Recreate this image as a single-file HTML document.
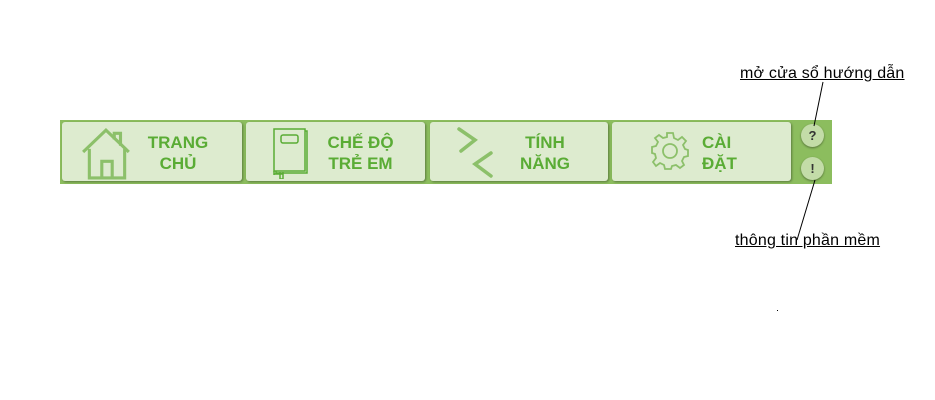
<!DOCTYPE html><html><head><style>
body{margin:0;width:935px;height:400px;background:#fff;position:relative;font-family:"Liberation Sans",sans-serif;overflow:hidden}
.bar{position:absolute;left:60px;top:120px;width:772px;height:64px;background:#8cbd5e}
.b{position:absolute;top:2px;height:59px;background:#ddebcf;border-radius:3px;box-shadow:1px 1px 2px rgba(0,0,0,.35)}
.t{position:absolute;color:#5aac35;font-weight:bold;font-size:17px;line-height:21px;text-align:center}
.c{position:absolute;left:741px;width:23px;height:23px;border-radius:50%;background:#c3dca8;box-shadow:0 1px 2px rgba(0,0,0,.4);text-align:center;font-weight:bold;font-size:13px;line-height:23px;color:#333}
.a{position:absolute;font-size:16px;text-decoration:underline;color:#000;letter-spacing:0.2px}
</style></head><body>
<div class="bar">
 <div class="b" style="left:2px;width:180px">
  <svg style="position:absolute;left:18px;top:4px" width="54" height="54" viewBox="0 0 52 52" fill="none" stroke="#8cc06a" stroke-width="3"><path d="M3 25 L25 4 L47 25"/><path d="M9 22 V50 H43 V22"/><path d="M33 13 V7 H39 V19"/><path d="M21 50 V34 H31 V50"/></svg>
  <div class="t" style="left:80px;top:10px;width:72px">TRANG<br>CHỦ</div></div>
 <div class="b" style="left:186px;width:179px">
  <svg style="position:absolute;left:25px;top:5px" width="40" height="52" viewBox="0 0 40 52" fill="none" stroke="#5aac35" stroke-width="1.5"><rect x="3" y="2" width="31" height="42"/><path d="M34 4 H36 V46 H5 V44"/><rect x="10" y="8" width="17" height="8" rx="2"/><path d="M3 44 V48 M3 47 H12 M9 45 V52 H12 V45"/></svg>
  <div class="t" style="left:72px;top:10px;width:85px">CHẾ ĐỘ<br>TRẺ EM</div></div>
 <div class="b" style="left:370px;width:178px">
  <svg style="position:absolute;left:25px;top:2px" width="40" height="56" viewBox="0 0 40 56" fill="none" stroke="#8cc06a" stroke-width="3.5" stroke-linecap="round"><path d="M4 5 L20 16 L6 27"/><path d="M36 29 L20 40 L36 52"/></svg>
  <div class="t" style="left:80px;top:10px;width:70px">TÍNH<br>NĂNG</div></div>
 <div class="b" style="left:552px;width:179px">
  <svg style="position:absolute;left:38px;top:9px" width="40" height="40" viewBox="-20 -20 40 40" fill="none" stroke="#8cc06a" stroke-width="1.8"><path d="M-3 -18 H3 L4 -13 L8 -11 L12 -14 L16 -10 L13 -6 L15 -2 L18 -1 V5 L14 6 L12 10 L14 14 L10 17 L6 14 L2 15 L1 18 H-5 L-6 14 L-10 12 L-14 15 L-17 11 L-14 7 L-15 3 L-18 2 V-4 L-14 -5 L-12 -9 L-15 -13 L-11 -16 L-7 -13 L-3 -14 Z"/><circle cx="0" cy="0" r="7"/></svg>
  <div class="t" style="left:78px;top:10px;width:60px;text-align:left;padding-left:12px">CÀI<br>ĐẶT</div></div>
 <div class="c" style="top:4px">?</div>
 <div class="c" style="top:37px">!</div>
</div>
<div class="a" style="left:740px;top:65px">mở cửa sổ hướng dẫn</div>
<div class="a" style="left:735px;top:232px">thông tin phần mềm</div>
<svg style="position:absolute;left:0;top:0" width="935" height="400"><path d="M823 82 L814 126 M815 180 L797 240" stroke="#000" stroke-width="1"/><rect x="777" y="310" width="1" height="1" fill="#000"/></svg>
</body></html>
